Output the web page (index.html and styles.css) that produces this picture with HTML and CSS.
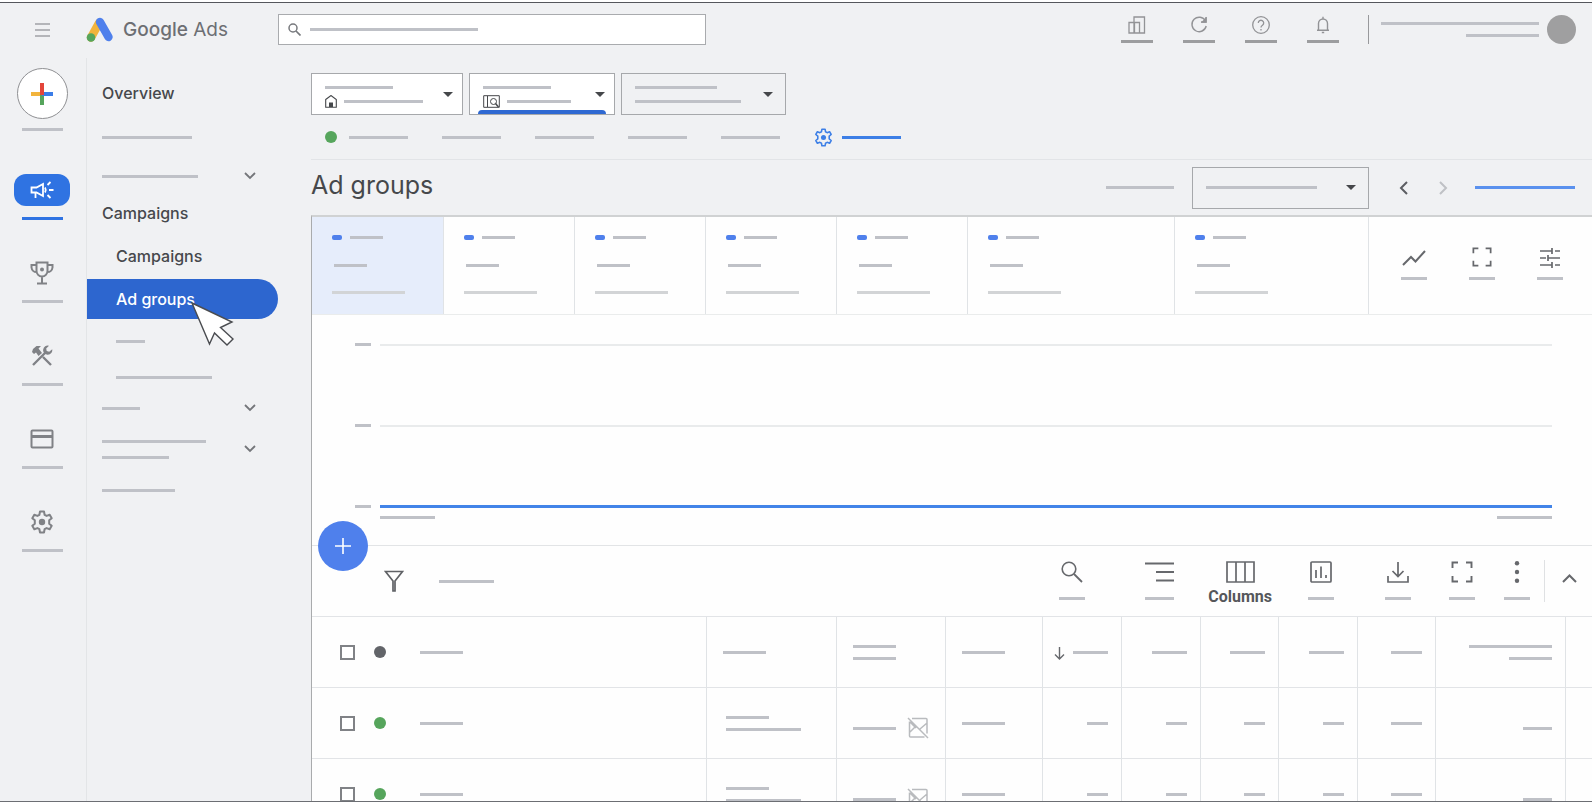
FILE: index.html
```html
<!DOCTYPE html>
<html lang="en">

<head>
    <meta charset="UTF-8">
    <meta name="viewport" content="width=device-width, initial-scale=1.0">
    <title>Google Ads - Ad groups</title>

    <link rel="stylesheet" href="styles.css">
</head>

<body>
    <!-- shared icons -->
    <svg class="sprite" aria-hidden="true">
        <symbol id="gear" viewBox="0 0 24 24">
            <path d="M10 1.5h4l.6 3.3 2 1.1 3.1-1.2 2 3.5-2.500 2.100v3.400l2.500 2.100-2 3.500-3.100-1.200-2 1.100-.6 3.300h-4l-.6-3.300-2-1.100-3.100 1.200-2-3.500 2.500-2.100v-3.400L2.300 8.200l2-3.500 3.100 1.200 2-1.100z" fill="none" stroke="currentColor" stroke-width="2" stroke-linejoin="round"/>
            <circle cx="12" cy="12" r="3.200" fill="currentColor"/>
        </symbol>
        <symbol id="chevron" viewBox="0 0 12 8">
            <path d="M1 1l5 5 5-5" fill="none" stroke="currentColor" stroke-width="1.800"/>
        </symbol>
        <symbol id="caret" viewBox="0 0 10 5">
            <path d="M0 0h10L5 5z" fill="currentColor"/>
        </symbol>
        <symbol id="search" viewBox="0 0 22 22">
            <circle cx="8" cy="8" r="6.800" fill="none" stroke="currentColor" stroke-width="1.600"/>
            <path d="M13 13l8 8" stroke="currentColor" stroke-width="1.800"/>
        </symbol>
        <symbol id="expand" viewBox="0 0 22 22">
            <path d="M1.500 7V1.500H7M15 1.500h5.500V7M20.500 15v5.500H15M7 20.500H1.500V15" fill="none" stroke="currentColor" stroke-width="1.900"/>
        </symbol>
        <symbol id="noimage" viewBox="0 0 22 22">
            <path d="M5 1.500h14a1 1 0 0 1 1 1v14M17.500 20h-14a1 1 0 0 1-1-1V4.500M3 15l5-5M13 12l7-6M1 1l20 20M3 5l6 6" fill="none" stroke="currentColor" stroke-width="1.500"/>
        </symbol>
    </svg>

    <div class="window">
        <header class="topbar">
            <button class="menu" aria-label="Menu"><span></span><span></span><span></span></button>
            <a class="brand" href="#">
                <svg width="28" height="26" viewBox="0 0 28 26">
                    <path d="M5 20.500L13 6" stroke="#f2b43c" stroke-width="8.400" stroke-linecap="round"/>
                    <path d="M14 5L22.500 20" stroke="#4f80ec" stroke-width="8.400" stroke-linecap="round"/>
                    <circle cx="5" cy="20.500" r="4.300" fill="#56a55c"/>
                </svg>
                <span class="brand-name"><b>Google</b> Ads</span>
            </a>
            <label class="search">
                <svg width="13" height="13" viewBox="0 0 13 13"><circle cx="5" cy="5" r="4" fill="none" stroke="currentColor" stroke-width="1.500"/><path d="M8 8l4.500 4.500" stroke="currentColor" stroke-width="1.700"/></svg>
                <span class="bar w168"></span>
                <input type="search" aria-label="Search">
            </label>
            <div class="tools">
                <button aria-label="Reports">
                    <svg width="18" height="18" viewBox="0 0 18 18" fill="none" stroke="currentColor" stroke-width="1.300"><path d="M1 6.500h10.500V17H1zM6 6.500V1h10.500v16H6zM6.500 6.500V17"/></svg>
                    <span class="bar w32"></span>
                </button>
                <button aria-label="Refresh">
                    <svg width="18" height="18" viewBox="0 0 18 18" fill="none" stroke="currentColor" stroke-width="1.400"><path d="M15.500 5A7.200 7.200 0 1 0 16.200 10M16 1v5h-5"/><path d="M16 2.500V6h-3.500z" fill="currentColor"/></svg>
                    <span class="bar w32"></span>
                </button>
                <button aria-label="Help">
                    <svg width="18" height="18" viewBox="0 0 18 18" fill="none" stroke="currentColor" stroke-width="1.300"><circle cx="9" cy="9" r="8.300"/><path d="M6.300 7a2.700 2.700 0 1 1 4.200 2.200C9.300 10 9 10.400 9 11.600M9 13v1.500"/></svg>
                    <span class="bar w32"></span>
                </button>
                <button aria-label="Notifications">
                    <svg width="18" height="18" viewBox="0 0 18 18" fill="none" stroke="currentColor" stroke-width="1.400"><path d="M4.500 14V7.500a4.500 4.500 0 0 1 9 0V14M3 14.300h12M9 3V.8M7.800 16.500h2.400"/></svg>
                    <span class="bar w32"></span>
                </button>
            </div>
            <div class="account">
                <div class="lines right"><span class="bar w158"></span><span class="bar w73"></span></div>
                <span class="avatar"></span>
            </div>
        </header>

        <div class="body">
            <nav class="rail" aria-label="Sections">
                <a class="create" href="#" aria-label="Create">
                    <span class="circle">
                        <svg width="24" height="24" viewBox="0 0 24 24" stroke-width="4"><path d="M1 12h11" stroke="#f2b43c"/><path d="M12 12v11" stroke="#56a55c"/><path d="M12 12h11" stroke="#3b7de8"/><path d="M12 1v12" stroke="#e3453a"/></svg>
                    </span>
                    <span class="bar w41"></span>
                </a>
                <a class="active" href="#" aria-label="Campaigns">
                    <span class="icon">
                        <svg width="24" height="20" viewBox="0 0 24 20" fill="none" stroke="currentColor" stroke-width="1.800"><path d="M1.500 7.500h5L13 4v12l-6.500-3.500h-5zM5.500 12.500V18M15 7.500q1.500 2.500 0 5M17.500 5l3-3M19 10h4.500M17.500 15l3 3"/></svg>
                    </span>
                    <span class="bar w41"></span>
                </a>
                <a href="#" aria-label="Goals">
                    <span class="icon">
                        <svg width="24" height="24" viewBox="0 0 24 24" fill="none" stroke="currentColor" stroke-width="2"><path d="M6.500 1.500h11V10a5.500 5.500 0 0 1-11 0zM6.500 4h-5v2.500A5 5 0 0 0 6.500 11M17.500 4h5v2.500a5 5 0 0 1-5 4.500M12 15.500V22M7 22.500h10"/><circle cx="12" cy="8.500" r="2" fill="currentColor" stroke="none"/></svg>
                    </span>
                    <span class="bar w41"></span>
                </a>
                <a href="#" aria-label="Tools">
                    <span class="icon">
                        <svg width="22" height="22" viewBox="0 0 22 22" fill="none" stroke="currentColor" stroke-width="2.400"><path d="M2 20L15 7M12 12l8 8"/><path d="M1 7l1-3 3.500-3H10L7.500 3.500 11 8 7.500 11 5 7.500 3 9z" fill="currentColor" stroke="none"/><path d="M18 .8a4.600 4.600 0 1 0 3.200 3.500l-3 2.500-2.500-.8-.5-2.500z" fill="currentColor" stroke="none"/></svg>
                    </span>
                    <span class="bar w41"></span>
                </a>
                <a href="#" aria-label="Billing">
                    <span class="icon">
                        <svg width="24" height="20" viewBox="0 0 24 20" fill="none" stroke="currentColor"><rect x="1.500" y="1.500" width="21" height="17" rx="1" stroke-width="2"/><path d="M2 7.500h20" stroke-width="3"/></svg>
                    </span>
                    <span class="bar w41"></span>
                </a>
                <a href="#" aria-label="Admin">
                    <span class="icon"><svg width="24" height="24"><use href="#gear"/></svg></span>
                    <span class="bar w41"></span>
                </a>
            </nav>

            <nav class="sidenav" aria-label="Pages">
                <a class="h44" href="#">Overview</a>
                <a class="h44" href="#"><span class="bar w90"></span></a>
                <a class="h34" href="#"><span class="bar w96"></span><svg width="12" height="8"><use href="#chevron"/></svg></a>
                <a class="h40" href="#">Campaigns</a>
                <a class="h46 sub" href="#">Campaigns</a>
                <a class="h40 sub current" href="#">Ad groups
                    <svg class="cursor" width="44" height="46" viewBox="0 0 44 46"><path d="M1 1L41 20 29.500 25.500 42 37 36 43 23.500 31 18.500 42z" fill="#fff" stroke="#4a4c50" stroke-width="1.400"/></svg>
                </a>
                <a class="h44 sub" href="#"><span class="bar w29"></span></a>
                <a class="h28 sub" href="#"><span class="bar w96"></span></a>
                <a class="h34" href="#"><span class="bar w38"></span><svg width="12" height="8"><use href="#chevron"/></svg></a>
                <a class="h48" href="#"><span class="lines"><span class="bar w104"></span><span class="bar w67"></span></span><svg width="12" height="8"><use href="#chevron"/></svg></a>
                <a class="h34" href="#"><span class="bar w73"></span></a>
            </nav>

            <main>
                <div class="scopes">
                    <button class="drop account-drop" aria-haspopup="listbox" aria-label="Account">
                        <span class="lines">
                            <span class="bar w68"></span>
                            <span class="row"><svg width="12" height="13" viewBox="0 0 12 13"><path d="M.7 4.500l5.300-4 5.300 4v7.800H.7z" fill="none" stroke="currentColor" stroke-width="1.100"/><path d="M4 7.500h4V12H4z" fill="currentColor"/></svg><span class="bar w79"></span></span>
                        </span>
                        <svg width="10" height="5"><use href="#caret"/></svg>
                    </button>
                    <button class="drop campaign-drop" aria-haspopup="listbox" aria-label="Campaign">
                        <span class="lines">
                            <span class="bar w68"></span>
                            <span class="row"><svg width="17" height="13" viewBox="0 0 17 13" fill="none" stroke="currentColor"><path d="M.7.7h15.600v11.600H.7zM4.500 1v11"/><circle cx="10.500" cy="6.500" r="3"/><path d="M12.500 8.500l3 3.500" stroke-width="1.500"/></svg><span class="bar w64"></span></span>
                        </span>
                        <svg width="10" height="5"><use href="#caret"/></svg>
                    </button>
                    <button class="drop plain group-drop" aria-haspopup="listbox" aria-label="Ad group">
                        <span class="lines">
                            <span class="bar w82"></span>
                            <span class="row"><span class="bar w106"></span></span>
                        </span>
                        <svg width="10" height="5"><use href="#caret"/></svg>
                    </button>
                </div>

                <div class="status">
                    <span class="dot green"></span>
                    <span class="bar w59"></span>
                    <span class="bar w59"></span>
                    <span class="bar w59"></span>
                    <span class="bar w59"></span>
                    <span class="bar w59"></span>
                    <a class="settings" href="#" aria-label="Settings"><svg width="19" height="19"><use href="#gear"/></svg><span class="bar w59"></span></a>
                </div>

                <div class="heading">
                    <h1>Ad groups</h1>
                    <span class="bar w68"></span>
                    <button class="drop plain date-drop" aria-haspopup="listbox" aria-label="Date range">
                        <span class="bar w111"></span>
                        <svg width="10" height="5"><use href="#caret"/></svg>
                    </button>
                    <button class="step" aria-label="Previous period"><svg width="9" height="14" viewBox="0 0 9 14"><path d="M8 1L2 7l6 6" fill="none" stroke="currentColor" stroke-width="2"/></svg></button>
                    <button class="step off" aria-label="Next period"><svg width="9" height="14" viewBox="0 0 9 14"><path d="M1 1l6 6-6 6" fill="none" stroke="currentColor" stroke-width="2"/></svg></button>
                    <a href="#" aria-label="Show last 30 days"><span class="bar blue w100"></span></a>
                </div>

                <div class="panel">
                    <div class="cards">
                        <button class="card selected" aria-label="Metric 1"><span class="row"><i></i><span class="bar w33"></span></span><span class="bar w33"></span><span class="bar w73"></span></button>
                        <button class="card" aria-label="Metric 2"><span class="row"><i></i><span class="bar w33"></span></span><span class="bar w33"></span><span class="bar w73"></span></button>
                        <button class="card" aria-label="Metric 3"><span class="row"><i></i><span class="bar w33"></span></span><span class="bar w33"></span><span class="bar w73"></span></button>
                        <button class="card" aria-label="Metric 4"><span class="row"><i></i><span class="bar w33"></span></span><span class="bar w33"></span><span class="bar w73"></span></button>
                        <button class="card" aria-label="Metric 5"><span class="row"><i></i><span class="bar w33"></span></span><span class="bar w33"></span><span class="bar w73"></span></button>
                        <button class="card wide" aria-label="Metric 6"><span class="row"><i></i><span class="bar w33"></span></span><span class="bar w33"></span><span class="bar w73"></span></button>
                        <button class="card last" aria-label="Metric 7"><span class="row"><i></i><span class="bar w33"></span></span><span class="bar w33"></span><span class="bar w73"></span></button>
                        <div class="chart-tools">
                            <button class="tool" aria-label="Chart type"><svg width="24" height="22" viewBox="0 0 24 22"><path d="M1 18l8-8 4.500 4.500L23 4" fill="none" stroke="currentColor" stroke-width="2"/></svg><span class="bar w26"></span></button>
                            <button class="tool" aria-label="Expand"><svg width="20" height="20"><use href="#expand"/></svg><span class="bar w26"></span></button>
                            <button class="tool" aria-label="Adjust"><svg width="22" height="22" viewBox="0 0 22 22"><path d="M1 4h12M16 4h5M13 1v6M1 11h6M9 11h12M9 8v6M1 18h12M16 18h5M13 15v6" fill="none" stroke="currentColor" stroke-width="1.700"/></svg><span class="bar w26"></span></button>
                        </div>
                    </div>

                    <div class="chart">
                        <div class="tick"><span class="bar w16"></span><hr></div>
                        <div class="tick"><span class="bar w16"></span><hr></div>
                        <div class="tick"><span class="bar w16"></span><hr class="series"></div>
                        <div class="dates"><span class="bar w55"></span><span class="bar w55"></span></div>
                    </div>

                    <div class="toolbar">
                        <button class="fab" aria-label="New ad group"><svg width="18" height="18" viewBox="0 0 18 18"><path d="M9 1v16M1 9h16" stroke="currentColor" stroke-width="1.600"/></svg></button>
                        <button class="filter" aria-label="Filter"><svg width="20" height="22" viewBox="0 0 20 22"><path d="M1.500 1.500h17L11 11v10H9V11z" fill="none" stroke="currentColor" stroke-width="1.700"/></svg><span class="bar w55"></span></button>
                        <div class="table-tools">
                            <button class="tool t-search" aria-label="Search table"><svg width="22" height="22"><use href="#search"/></svg><span class="bar w26"></span></button>
                            <button class="tool t-segment" aria-label="Segment"><svg width="29" height="22" viewBox="0 0 29 22"><path d="M0 2.500h29M11 11h18M11 19.500h18" stroke="currentColor" stroke-width="2"/></svg><span class="bar w29"></span></button>
                            <button class="tool t-columns"><svg width="29" height="22" viewBox="0 0 29 22"><path d="M1 1h27v20H1zM10 1v20M19 1v20" fill="none" stroke="currentColor" stroke-width="1.700"/></svg><span class="name">Columns</span></button>
                            <button class="tool t-reports" aria-label="Reports"><svg width="22" height="22" viewBox="0 0 22 22" fill="none" stroke="currentColor" stroke-width="1.700"><rect x="1" y="1" width="20" height="20" rx="1"/><path d="M6 9v8M11 5.500V17M16 14v3"/></svg><span class="bar w26"></span></button>
                            <button class="tool t-download" aria-label="Download"><svg width="22" height="22" viewBox="0 0 22 22"><path d="M11 1v14M5.500 10l5.500 5.500 5.500-5.500M1 15v6h20v-6" fill="none" stroke="currentColor" stroke-width="1.700"/></svg><span class="bar w26"></span></button>
                            <button class="tool t-expand" aria-label="Expand table"><svg width="22" height="22"><use href="#expand"/></svg><span class="bar w26"></span></button>
                            <button class="tool t-more" aria-label="More"><svg width="22" height="22" viewBox="0 0 22 22" fill="currentColor"><circle cx="11" cy="2.300" r="2.200"/><circle cx="11" cy="11" r="2.200"/><circle cx="11" cy="19.700" r="2.200"/></svg><span class="bar w26"></span></button>
                        </div>
                        <button class="collapse" aria-label="Collapse"><svg width="15" height="9" viewBox="0 0 15 9"><path d="M1 8l6.500-6.500L14 8" fill="none" stroke="currentColor" stroke-width="2"/></svg></button>
                    </div>

                    <table>
                        <colgroup>
                            <col>
                            <col class="c130">
                            <col class="c109">
                            <col class="c97">
                            <col class="c79">
                            <col class="c79">
                            <col class="c78">
                            <col class="c79">
                            <col class="c78">
                            <col class="c130">
                            <col class="c26">
                        </colgroup>
                        <thead>
                            <tr>
                                <th><div class="cell name-cell"><input type="checkbox" aria-label="Select all"><span class="dot dark"></span><span class="bar w43"></span></div></th>
                                <th><div class="cell"><span class="bar w43"></span></div></th>
                                <th><div class="cell"><span class="lines"><span class="bar w43"></span><span class="bar w43"></span></span></div></th>
                                <th><div class="cell"><span class="bar w43"></span></div></th>
                                <th><div class="cell end"><svg class="sort" width="11" height="13" viewBox="0 0 11 13"><path d="M5.500 0v12M1 7.500L5.500 12 10 7.500" fill="none" stroke="currentColor" stroke-width="1.400"/></svg><span class="bar w35"></span></div></th>
                                <th><div class="cell end"><span class="bar w35"></span></div></th>
                                <th><div class="cell end"><span class="bar w35"></span></div></th>
                                <th><div class="cell end"><span class="bar w35"></span></div></th>
                                <th><div class="cell end"><span class="bar w31"></span></div></th>
                                <th><div class="cell end"><span class="lines right"><span class="bar w83"></span><span class="bar w43"></span></span></div></th>
                                <th></th>
                            </tr>
                        </thead>
                        <tbody>
                            <tr>
                                <td><div class="cell name-cell"><input type="checkbox" aria-label="Select ad group"><span class="dot green"></span><span class="bar w43"></span></div></td>
                                <td><div class="cell campaign"><span class="lines"><span class="bar w43"></span><span class="bar w75"></span></span></div></td>
                                <td><div class="cell low"><span class="bar w43"></span><svg class="noimage" width="22" height="22"><use href="#noimage"/></svg></div></td>
                                <td><div class="cell"><span class="bar w43"></span></div></td>
                                <td><div class="cell end"><span class="bar w21"></span></div></td>
                                <td><div class="cell end"><span class="bar w21"></span></div></td>
                                <td><div class="cell end"><span class="bar w21"></span></div></td>
                                <td><div class="cell end"><span class="bar w21"></span></div></td>
                                <td><div class="cell end"><span class="bar w31"></span></div></td>
                                <td><div class="cell end low"><span class="bar w29"></span></div></td>
                                <td></td>
                            </tr>
                            <tr>
                                <td><div class="cell name-cell"><input type="checkbox" aria-label="Select ad group"><span class="dot green"></span><span class="bar w43"></span></div></td>
                                <td><div class="cell campaign"><span class="lines"><span class="bar w43"></span><span class="bar w75"></span></span></div></td>
                                <td><div class="cell low"><span class="bar w43"></span><svg class="noimage" width="22" height="22"><use href="#noimage"/></svg></div></td>
                                <td><div class="cell"><span class="bar w43"></span></div></td>
                                <td><div class="cell end"><span class="bar w21"></span></div></td>
                                <td><div class="cell end"><span class="bar w21"></span></div></td>
                                <td><div class="cell end"><span class="bar w21"></span></div></td>
                                <td><div class="cell end"><span class="bar w21"></span></div></td>
                                <td><div class="cell end"><span class="bar w31"></span></div></td>
                                <td><div class="cell end low"><span class="bar w29"></span></div></td>
                                <td></td>
                            </tr>
                        </tbody>
                    </table>
                </div>
            </main>
        </div>
    </div>
</body>

</html>
```
FILE: styles.css
```css
* {
    box-sizing: border-box;
}

body {
    margin: 0;
    height: 100vh;
    padding: 2px 0 4px;
    overflow: hidden;
    font-family: Inter, Roboto, sans-serif;
    background-color: #fff;
    color: #3c4043;
}

button {
    padding: 0;
    border: 0;
    background: none;
    color: inherit;
    font: inherit;
}

a {
    color: inherit;
    text-decoration: none;
}

svg {
    display: block;
    flex: none;
}

.sprite {
    position: absolute;
    width: 0;
    height: 0;
}

.window {
    display: flex;
    flex-direction: column;
    height: 100%;
    overflow: hidden;
    background-color: #f0f1f3;
    border-top: 1px solid #55575c;
    border-bottom: 1px solid #6c6e73;
}

/* placeholder bars */
.bar {
    display: block;
    flex: none;
    height: 3px;
    background-color: #bfc1c7;
}

.w16 { width: 16px; }
.w21 { width: 21px; }
.w26 { width: 26px; }
.w29 { width: 29px; }
.w31 { width: 31px; }
.w32 { width: 32px; }
.w33 { width: 33px; }
.w35 { width: 35px; }
.w38 { width: 38px; }
.w41 { width: 41px; }
.w43 { width: 43px; }
.w55 { width: 55px; }
.w59 { width: 59px; }
.w64 { width: 64px; }
.w67 { width: 67px; }
.w68 { width: 68px; }
.w73 { width: 73px; }
.w75 { width: 75px; }
.w79 { width: 79px; }
.w82 { width: 82px; }
.w83 { width: 83px; }
.w90 { width: 90px; }
.w96 { width: 96px; }
.w100 { width: 100px; }
.w104 { width: 104px; }
.w106 { width: 106px; }
.w111 { width: 111px; }
.w158 { width: 158px; }
.w168 { width: 168px; }

.blue {
    background-color: #5a91ee;
}

.lines {
    display: flex;
    flex-direction: column;
    gap: 9px;
}

.right {
    align-items: flex-end;
}

.row {
    display: flex;
    align-items: center;
    gap: 8px;
}

.dot {
    flex: none;
    width: 12px;
    height: 12px;
    border-radius: 50%;
}

.green {
    background-color: #56a55c;
}

.dark {
    background-color: #626469;
}

/* top bar */
.topbar {
    display: flex;
    flex: none;
    align-items: center;
    height: 55px;
    padding: 0 16px 2px 35px;
}

.menu {
    display: flex;
    flex-direction: column;
    gap: 4px;
    width: 15px;
}

.menu span {
    height: 2px;
    background-color: #b4b5b9;
}

.brand {
    display: flex;
    align-items: center;
    gap: 9px;
    width: 192px;
    margin-left: 36px;
    color: #6d6f73;
}

.brand-name {
    font-size: 19px;
}

.brand-name b {
    font-weight: 500;
}

.search {
    display: flex;
    align-items: center;
    width: 428px;
    height: 31px;
    padding-left: 9px;
    gap: 9px;
    border: 1px solid #a9abae;
    background-color: #fff;
    color: #77797d;
}

.search input {
    flex: 1;
    min-width: 0;
    border: 0;
    outline: 0;
    background: none;
}

.tools {
    display: flex;
    gap: 30px;
    margin-left: auto;
    color: #929396;
}

.tools button {
    display: flex;
    flex-direction: column;
    align-items: center;
    gap: 6px;
}

.tools .bar {
    background-color: #9c9d9f;
}

.account {
    display: flex;
    align-items: center;
    gap: 8px;
    margin-left: 29px;
    padding-left: 12px;
    border-left: 1px solid #98999c;
}

.avatar {
    width: 29px;
    height: 29px;
    border-radius: 50%;
    background-color: #9f9fa0;
}

.body {
    display: flex;
    flex: 1;
    min-height: 0;
}

/* icon rail */
.rail {
    display: flex;
    flex: none;
    flex-direction: column;
    align-items: center;
    gap: 37px;
    width: 87px;
    padding: 10px 2px 0 0;
    border-right: 1px solid #e3e5e7;
    color: #808286;
}

.rail a {
    display: flex;
    flex-direction: column;
    align-items: center;
    gap: 11px;
}

.rail .create {
    gap: 9px;
    margin-bottom: 6px;
}

.circle {
    display: flex;
    align-items: center;
    justify-content: center;
    width: 51px;
    height: 51px;
    border: 1px solid #8f9093;
    border-radius: 50%;
    background-color: #fff;
}

.icon {
    display: flex;
    align-items: center;
    justify-content: center;
    width: 56px;
    height: 32px;
    border-radius: 12px;
}

.active .icon {
    background-color: #2f73e2;
    color: #fff;
}

.active .bar {
    background-color: #2f73e2;
}

/* page navigation */
.sidenav {
    flex: none;
    width: 224px;
    padding-top: 13px;
    font-size: 16px;
    font-weight: 500;
}

.sidenav a {
    display: flex;
    align-items: center;
    justify-content: space-between;
    width: 191px;
    padding: 0 22px 0 15px;
    color: #46484c;
}

.sidenav a > svg {
    color: #74767a;
}

.sidenav .sub {
    padding-left: 29px;
}

.sidenav .lines {
    gap: 13px;
}

.sidenav .current {
    position: relative;
    border-radius: 0 20px 20px 0;
    background-color: #2d66cf;
    color: #fff;
}

.cursor {
    position: absolute;
    left: 104px;
    top: 23px;
}

.h28 { height: 28px; }
.h34 { height: 34px; }
.h40 { height: 40px; }
.h44 { height: 44px; }
.h46 { height: 46px; }
.h48 { height: 48px; }

main {
    display: flex;
    flex: 1;
    flex-direction: column;
    min-width: 0;
    padding-top: 15px;
}

/* account, campaign and ad group pickers */
.scopes {
    display: flex;
    gap: 6px;
}

.drop {
    display: flex;
    align-items: center;
    justify-content: space-between;
    height: 42px;
    padding: 0 9px 0 13px;
    border: 1px solid #a6a8ab;
    background-color: #fff;
    color: #45474a;
}

.drop .lines {
    gap: 6px;
    padding-top: 6px;
}

.drop .row {
    height: 13px;
    gap: 7px;
}

.account-drop {
    width: 152px;
}

.campaign-drop {
    position: relative;
    width: 146px;
}

.campaign-drop::after {
    content: "";
    position: absolute;
    left: 8px;
    right: 8px;
    bottom: 0;
    height: 4px;
    border-radius: 4px 4px 0 0;
    background-color: #2f69d2;
}

.group-drop {
    width: 165px;
    padding-right: 12px;
}

.plain {
    background-color: transparent;
}

.status {
    display: flex;
    align-items: center;
    gap: 34px;
    height: 45px;
    padding-left: 14px;
    border-bottom: 1px solid #e2e4e7;
}

.status .dot {
    margin-right: -22px;
}

.settings {
    display: flex;
    align-items: center;
    gap: 9px;
    color: #3d7fe6;
}

.settings .bar {
    background-color: #3d7fe6;
}

.heading {
    display: flex;
    align-items: center;
    height: 55px;
    padding-right: 17px;
}

h1 {
    margin: 0 auto 5px 0;
    font-size: 25px;
    font-weight: 400;
    line-height: 32px;
    color: #46484b;
}

.date-drop {
    width: 177px;
    margin: 0 30px 0 18px;
    padding-right: 12px;
}

.step {
    margin-right: 31px;
    color: #5c5e62;
}

.off {
    margin-right: 27px;
    color: #bfc1c5;
}

/* metric cards */
.panel {
    flex: 1;
    min-height: 0;
    border-top: 2px solid #d0d2d3;
    border-left: 1px solid #a9abad;
    background-color: #fefefe;
}

.cards {
    display: flex;
    height: 98px;
    border-bottom: 1px solid #eaecec;
}

.card {
    display: flex;
    flex: none;
    flex-direction: column;
    align-items: flex-start;
    width: 131px;
    padding: 18px 0 0 20px;
    border-right: 1px solid #e0e3e6;
}

.card i {
    width: 10px;
    height: 5px;
    border-radius: 2px;
    background-color: #4f80ec;
}

.card > .bar {
    margin: 24px 0 0 2px;
}

.card > .bar:last-child {
    margin-left: 0;
    background-color: #d2d4d6;
}

.selected {
    width: 132px;
    background-color: #e6edfb;
}

.wide {
    width: 207px;
}

.last {
    width: 194px;
}

.chart-tools {
    display: flex;
    flex: 1;
    align-items: flex-start;
    justify-content: space-between;
    padding: 30px 29px 0 32px;
}

.tool {
    display: flex;
    flex-direction: column;
    align-items: center;
    gap: 14px;
    color: #66686c;
}

.chart-tools .tool {
    justify-content: space-between;
    height: 33px;
    gap: 0;
}

/* chart */
.chart {
    height: 231px;
    padding: 28px 40px 0 43px;
    border-bottom: 1px solid #e2e4e6;
}

.tick {
    display: flex;
    align-items: center;
    gap: 9px;
    height: 3px;
    margin-bottom: 78px;
}

.tick:nth-child(3) {
    margin-bottom: 8px;
}

hr {
    flex: 1;
    height: 2px;
    margin: 0;
    border: 0;
    background-color: #e9ebec;
}

.series {
    height: 3px;
    background-color: #4284e8;
}

.dates {
    display: flex;
    justify-content: space-between;
    padding-left: 25px;
}

/* table toolbar */
.toolbar {
    position: relative;
    display: flex;
    align-items: flex-start;
    height: 71px;
    border-bottom: 1px solid #e2e4e7;
}

.fab {
    position: absolute;
    left: 6px;
    top: -25px;
    display: flex;
    align-items: center;
    justify-content: center;
    width: 50px;
    height: 50px;
    border-radius: 50%;
    background-color: #4f80ec;
    color: #fff;
}

.filter {
    display: flex;
    align-items: center;
    gap: 35px;
    margin: 24px auto 0 72px;
    color: #5f6165;
}

.table-tools {
    display: flex;
    padding: 15px 14px 0 0;
}

.t-segment {
    margin-left: 60px;
}

.t-columns {
    margin-left: 34px;
    gap: 4px;
}

.t-reports {
    margin-left: 36px;
}

.t-download {
    margin-left: 51px;
}

.t-expand {
    margin-left: 38px;
}

.t-more {
    margin-left: 29px;
}

.name {
    font-family: Roboto, sans-serif;
    font-size: 16px;
    font-weight: 700;
    line-height: 20px;
    color: #55575b;
}

.collapse {
    height: 42px;
    margin-top: 14px;
    padding: 0 15px 6px 17px;
    border-left: 1px solid #dfe1e3;
    color: #66686c;
}

/* ad group table */
table {
    width: 100%;
    table-layout: fixed;
    border-collapse: separate;
    border-spacing: 0;
}

.c26 { width: 26px; }
.c78 { width: 78px; }
.c79 { width: 79px; }
.c97 { width: 97px; }
.c109 { width: 109px; }
.c130 { width: 130px; }

th, td {
    height: 71px;
    padding: 0;
    border-right: 1px solid #e0e3e6;
    border-bottom: 1px solid #e2e4e7;
}

th:last-child, td:last-child {
    border-right: 0;
}

.cell {
    display: flex;
    align-items: center;
    height: 70px;
    padding: 0 13px 0 16px;
}

.name-cell {
    padding-left: 28px;
}

.name-cell .dot {
    margin: 0 34px 0 19px;
}

.end {
    justify-content: flex-end;
}

.campaign {
    padding-left: 19px;
}

.low {
    padding-top: 10px;
}

.sort {
    margin: 2px 8px 0 0;
    color: #66686c;
}

.noimage {
    margin-left: 11px;
    color: #b9bbbe;
}

input[type="checkbox"] {
    appearance: none;
    width: 15px;
    height: 15px;
    margin: 0;
    border: 2px solid #808286;
    background-color: #fff;
}
```
